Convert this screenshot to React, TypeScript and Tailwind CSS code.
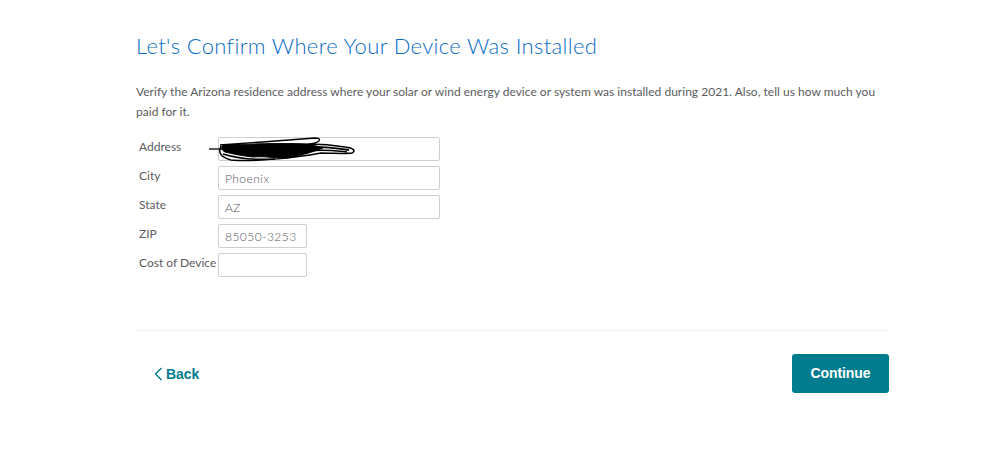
import React from 'react';

const rows = [
  { label: 'Address', value: '', wide: true },
  { label: 'City', value: 'Phoenix', wide: true },
  { label: 'State', value: 'AZ', wide: true },
  { label: 'ZIP', value: '85050-3253', wide: false },
  { label: 'Cost of Device', value: '', wide: false },
];

function Scribble() {
  return (
    <svg className="absolute left-[-9px] top-[-1px] pointer-events-none" width="150" height="28" viewBox="0 0 150 28" fill="none" stroke="#000">
      <path d="M0 13 H14" strokeWidth="1.3" />
      <path d="M11 9 C40 7 80 4 106 2 C112 2 112 5 106 7 C100 9 96 9 90 10" strokeWidth="1.4" />
      <path d="M12 10 C9 16 11 21 22 24 C45 26 85 22 112 17 C124 17 136 18 143 17 C147 15 145 12 136 11 C124 9 112 8 100 8" strokeWidth="1.5" />
      <path d="M14 9 C40 8 70 7 100 8 L114 12 C104 16 90 20 78 22 C64 22 56 20 44 21 C34 20 24 18 16 16 C12 14 12 11 14 9 Z" fill="#000" strokeWidth="1" />
      <path d="M14 18 C30 23 50 24 66 23" strokeWidth="1.6" />
      <path d="M100 11 C112 10 126 12 140 14" strokeWidth="1.8" />
      <path d="M100 15 C114 13 128 15 138 16" strokeWidth="1.5" />
    </svg>
  );
}

export default function App() {
  return (
    <div className="w-[999px] h-[474px] bg-white overflow-hidden font-['Lato',sans-serif]">
      <div className="ml-[136px] w-[752px] pt-[32px]">
        <h1 className="text-[22px] leading-[28px] font-light tracking-[0.35px] text-[#0a6cc4]">
          Let's Confirm Where Your Device Was Installed
        </h1>
        <p className="mt-[22px] text-[12px] leading-[20px] tracking-[0.02px] text-[#5b5b60]">
          Verify the Arizona residence address where your solar or wind energy device or system was installed during 2021. Also, tell us how much you paid for it.
        </p>

        <div className="mt-[15px] flex flex-col gap-[5px]">
          {rows.map((row) => (
            <div key={row.label} className="flex">
              <label className="w-[82px] pl-[3px] pt-[1px] text-[12px] leading-[18px] text-[#5b5b60] whitespace-nowrap">
                {row.label}
              </label>
              <div className="relative">
                <input
                  readOnly
                  value={row.value}
                  className={`h-[24px] ${row.wide ? 'w-[222px]' : 'w-[89px]'} block border border-[#cfcfcf] rounded-[2px] pl-[6px] text-[12px] font-light tracking-[0.45px] text-[#56565a] outline-none`}
                />
                {row.label === 'Address' && <Scribble />}
              </div>
            </div>
          ))}
        </div>

        <div className="mt-[53px] border-t border-[#eeeeee] pt-[23px] flex items-center justify-between">
          <button className="flex items-center gap-[3px] pl-[18px] pt-[1px] h-[39px] text-[14px] font-bold tracking-[-0.1px] text-[#007c8f] font-['Liberation_Sans',sans-serif]">
            <svg width="9" height="14" viewBox="0 0 9 14" fill="none" stroke="#007c8f" strokeWidth="1.4">
              <path d="M7.500 1 L1.500 7 L7.500 13" />
            </svg>
            Back
          </button>
          <button className="w-[97px] h-[39px] mr-[-1px] rounded-[3px] bg-[#007c8f] text-white text-[14px] font-bold tracking-[-0.1px] font-['Liberation_Sans',sans-serif]">
            Continue
          </button>
        </div>
      </div>
    </div>
  );
}
